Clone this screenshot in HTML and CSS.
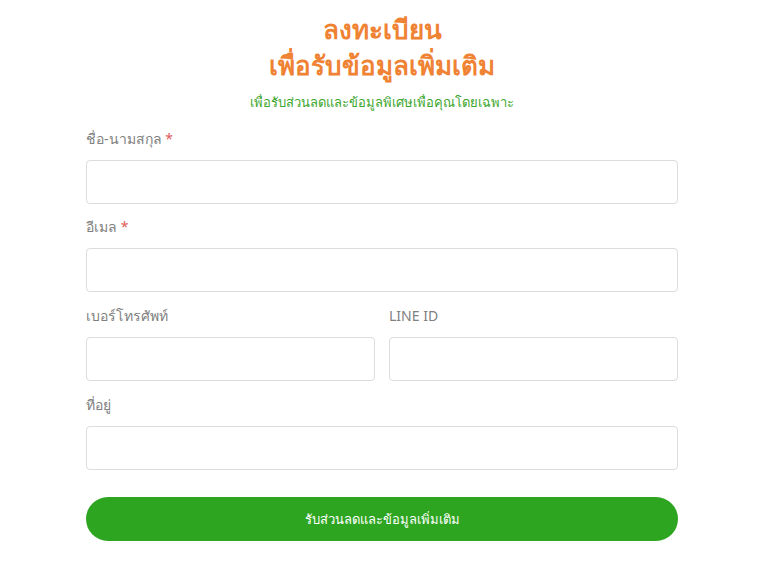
FILE: index.html
```html
<!DOCTYPE html>
<html lang="th">
<head>
    <meta charset="utf-8" />
    <title>ลงทะเบียน</title>
    <link rel="stylesheet" href="styles.css">
</head>
<body>

    <section class="register">
        <h1 class="title">ลงทะเบียน<br>เพื่อรับข้อมูลเพิ่มเติม</h1>
        <p class="subtitle">เพื่อรับส่วนลดและข้อมูลพิเศษเพื่อคุณโดยเฉพาะ</p>

        <form class="form">
            <label class="label">ชื่อ-นามสกุล <span class="req">*</span></label>
            <input class="input" type="text">

            <label class="label">อีเมล <span class="req">*</span></label>
            <input class="input" type="email">

            <div class="row">
                <div class="col">
                    <label class="label">เบอร์โทรศัพท์</label>
                    <input class="input" type="tel">
                </div>
                <div class="col">
                    <label class="label">LINE ID</label>
                    <input class="input" type="text">
                </div>
            </div>

            <label class="label label-wide">ที่อยู่</label>
            <input class="input" type="text">

            <button class="submit" type="button">รับส่วนลดและข้อมูลเพิ่มเติม</button>
        </form>
    </section>

</body>
</html>
```

FILE: styles.css
```css
body{
    margin: 0;
    background: #fff;
    font-family: "Noto Sans", "DejaVu Sans", sans-serif;
}

.register{
    width: 592px;
    margin-left: 86px;
    padding-top: 11px;
}

.title{
    margin: 0;
    text-align: center;
    color: #ef8233;
    font-size: 26px;
    line-height: 36px;
    font-weight: bold;
}

.subtitle{
    margin: 9px 0 0;
    text-align: center;
    color: #3da62e;
    font-size: 13px;
    line-height: 20px;
}

.form{
    display: flex;
    flex-direction: column;
    padding-top: 4px;
}

.label{
    display: block;
    margin: 13px 0 11px;
    color: #808080;
    font-size: 14px;
    line-height: 20px;
}

.label-wide{
    margin-top: 14px;
}

.req{
    color: #e05a5a;
}

.input{
    box-sizing: border-box;
    width: 100%;
    height: 44px;
    margin: 0;
    border: 1px solid #dcdcdc;
    border-radius: 4px;
    background: #fff;
}

.row{
    display: flex;
    gap: 14px;
    margin-top: 1px;
}

.col{
    flex: 1;
}

.submit{
    margin-top: 27px;
    height: 44px;
    border: none;
    border-radius: 22px;
    background: #2da520;
    color: #fff;
    font-family: inherit;
    font-size: 13px;
}
```
